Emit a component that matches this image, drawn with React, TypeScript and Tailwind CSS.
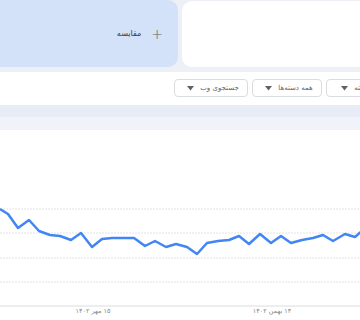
import React from 'react';

const points: [number, number][] = [
  [0, 209], [8, 214], [18, 228], [29, 220], [39, 231], [50, 235], [60, 236], [71, 240],
  [81, 233], [92, 247], [102, 239], [112, 238], [122, 238], [134, 238], [145, 246],
  [155, 241], [166, 247], [176, 244], [187, 247], [197, 254], [207, 243], [218, 241],
  [229, 240], [239, 236], [249, 244], [260, 234], [271, 243], [281, 236], [291, 243],
  [302, 240], [313, 238], [323, 235], [333, 241], [345, 234], [355, 237], [362, 231],
];

const top = 130;
const gridLines = [209, 233, 258, 282];

const Dropdown = ({ label, width }: { label: string; width: string }) => (
  <div
    className={`${width} h-[18px] shrink-0 rounded-[4px] border border-[#dadce0] bg-white flex items-center justify-center gap-[6px] pl-[4px] text-[7px] text-[#5f6368]`}
    dir="rtl"
  >
    <span>{label}</span>
    <svg width="7" height="5" viewBox="0 0 7 5">
      <path d="M0 0 L7 0 L3.5 4.5 Z" fill="#5f6368" />
    </svg>
  </div>
);

const App = () => {
  const path = points.map(([x, y], i) => `${i === 0 ? 'M' : 'L'}${x} ${y - top}`).join(' ');

  return (
    <div
      className="w-[360px] h-[320px] overflow-hidden bg-[#edf0f7] flex flex-col"
      style={{ fontFamily: '"DejaVu Sans", "Noto Sans", sans-serif' }}
    >
      {/* compare cards */}
      <div className="h-[67px] flex gap-[4px] shrink-0">
        <div className="w-[178px] shrink-0 bg-[#d3e2f8] rounded-r-[10px] flex items-center justify-end pr-[15px]">
          <div className="flex items-center gap-[10px] text-[#3c4043]">
            <span className="text-[8px]" dir="rtl">مقایسه</span>
            <span className="text-[14px] leading-none font-light text-[#5f6368]">+</span>
          </div>
        </div>
        <div className="flex-1 mt-[1px] bg-white rounded-l-[10px]"></div>
      </div>

      {/* filters */}
      <div className="mt-[5px] h-[33px] bg-white flex gap-[4px] pl-[174px] pt-[7px] shrink-0 overflow-hidden">
        <Dropdown label="جستجوی وب" width="w-[74px]" />
        <Dropdown label="همه دسته‌ها" width="w-[70px]" />
        <Dropdown label="۱۲ ماه گذشته" width="w-[80px]" />
      </div>

      <div className="h-[12px] bg-[#e8ecf6] shrink-0"></div>
      <div className="h-[13px] bg-[#f0f3f9] shrink-0"></div>

      {/* chart */}
      <div className="flex-1 bg-white">
        <svg width="360" height="190" viewBox="0 0 360 190">
          {gridLines.map((y) => (
            <line key={y} x1="0" x2="360" y1={y - top} y2={y - top} stroke="#e3e3e3" strokeWidth="1" strokeDasharray="2 1" />
          ))}
          <line x1="0" x2="360" y1={306 - top} y2={306 - top} stroke="#dadce0" strokeWidth="1" />
          <path d={path} fill="none" stroke="#4285f4" strokeWidth="2.5" strokeLinejoin="round" />
          <text x="93" y={313 - top} textAnchor="middle" fontSize="6.5" fill="#80868b" direction="rtl">
            ۱۵ مهر ۱۴۰۲
          </text>
          <text x="272" y={313 - top} textAnchor="middle" fontSize="6.5" fill="#80868b" direction="rtl">
            ۱۴ بهمن ۱۴۰۲
          </text>
        </svg>
      </div>
    </div>
  );
};

export default App;
